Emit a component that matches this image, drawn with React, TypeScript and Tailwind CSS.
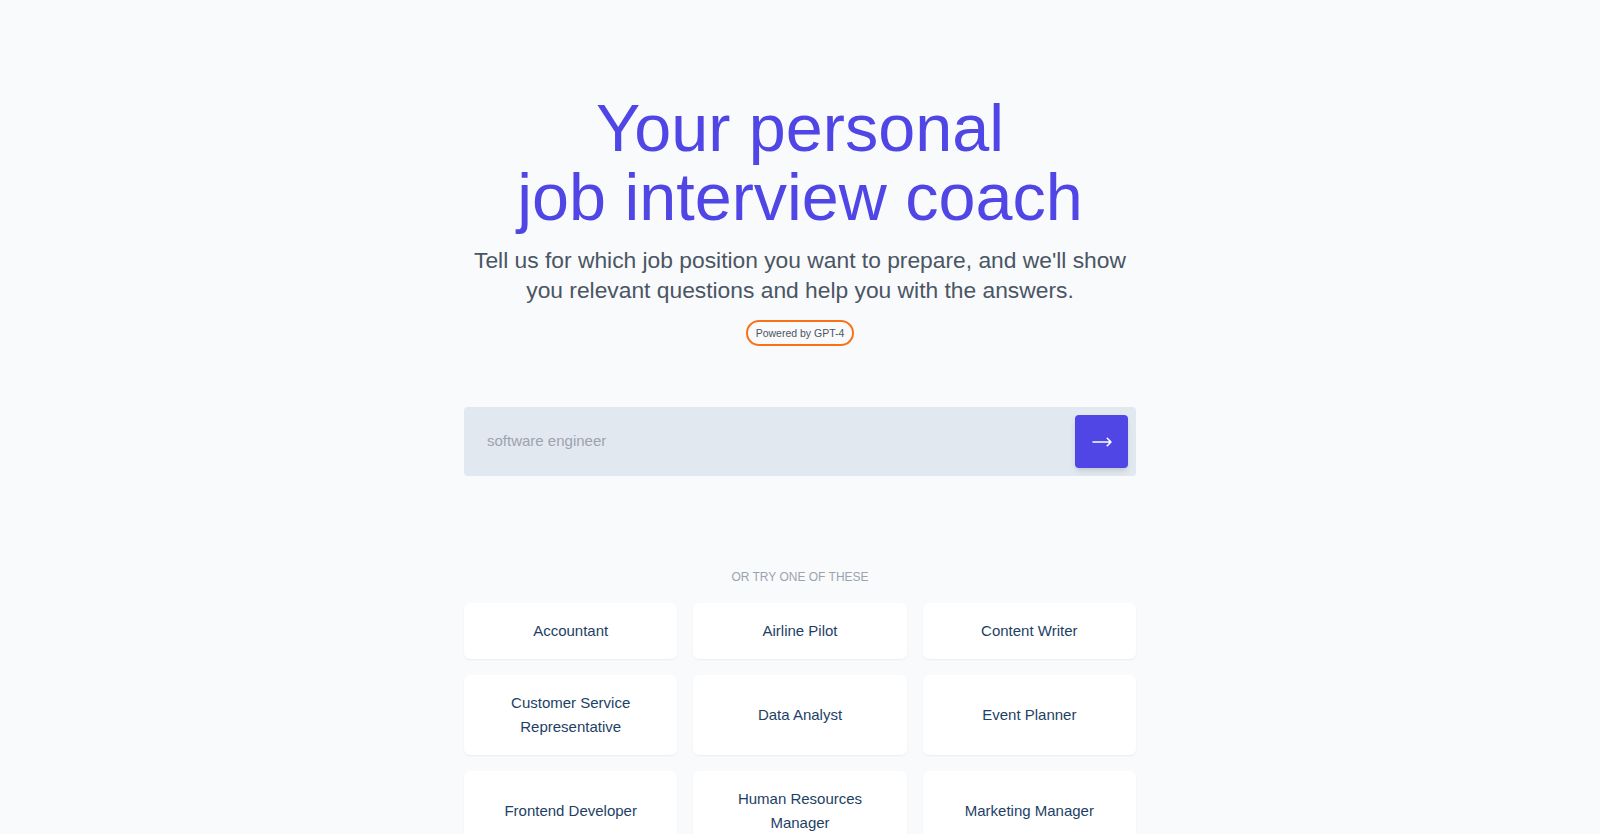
import React from "react";
import { HiArrowLongRight } from "react-icons/hi2";

const jobs = [
  "Accountant",
  "Airline Pilot",
  "Content Writer",
  "Customer Service Representative",
  "Data Analyst",
  "Event Planner",
  "Frontend Developer",
  "Human Resources Manager",
  "Marketing Manager",
];

export default function App() {
  return (
    <div
      className="min-h-screen bg-[#f8fafc] pt-[94px] pb-16"
      style={{ fontFamily: '"Liberation Sans", Arial, sans-serif' }}
    >
      <div className="mx-auto flex w-[672px] flex-col items-center">
        <h1 className="text-center text-[66.5px] font-normal leading-[69px] text-[#4f46e5]">
          Your personal
          <br />
          job interview coach
        </h1>
        <p className="mt-[13px] max-w-[664px] text-center text-[22.8px] leading-[30px] text-[#4b5563]">
          Tell us for which job position you want to prepare, and we'll show you relevant questions and help you with the answers.
        </p>
        <span className="mt-[15px] rounded-full border-2 border-[#f97316] px-2 py-[4px] text-[10.5px] leading-[14px] text-[#4b5563]">
          Powered by GPT-4
        </span>

        <div className="mt-[61px] flex h-[69px] w-full items-center rounded-sm bg-[#e2e8f0] p-2 pl-[23px]">
          <input
            className="flex-1 bg-transparent text-[15px] text-[#374151] outline-none placeholder:text-[#9ca3af]"
            placeholder="software engineer"
          />
          <button className="flex h-[53px] w-[53px] items-center justify-center rounded-[4px] bg-[#4f46e5] text-white shadow-md">
            <HiArrowLongRight className="h-6 w-6" />
          </button>
        </div>

        <div className="mt-[93px] text-xs uppercase leading-4 text-[#9ca3af]">
          Or try one of these
        </div>

        <div className="mt-[18px] grid w-full grid-cols-3 gap-4">
          {jobs.map((j) => (
            <div
              key={j}
              className="flex items-center justify-center rounded-md bg-white px-4 py-4 text-center text-[15px] leading-6 text-[#1e3f66] shadow-[0_1px_2px_rgba(15,23,42,0.06)]"
            >
              {j}
            </div>
          ))}
        </div>
      </div>
    </div>
  );
}
